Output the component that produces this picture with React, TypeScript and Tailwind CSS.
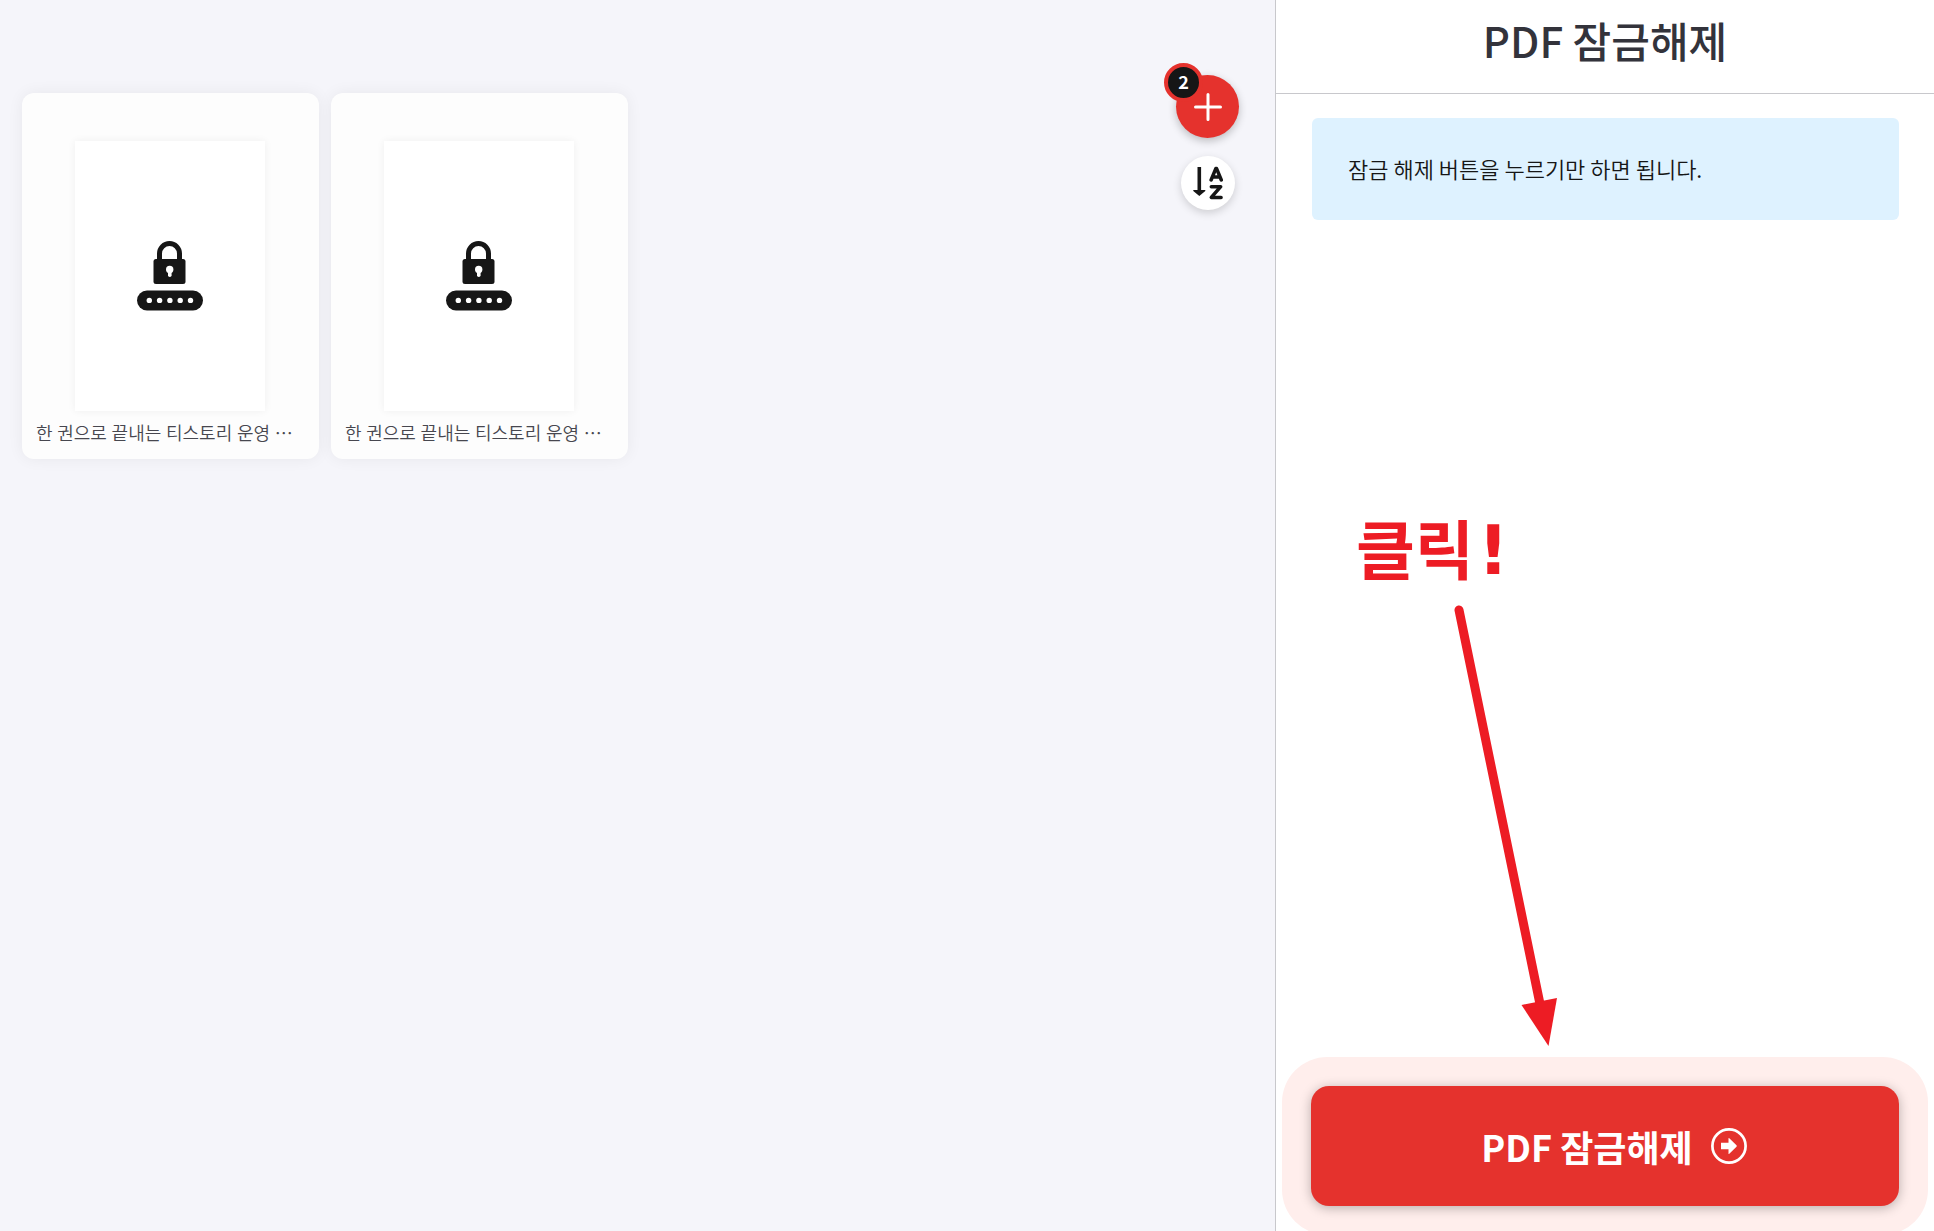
import React from "react";

interface FileCardProps {
  name: string;
}

const LockedIcon = () => (
  <svg width="66" height="70" viewBox="0 0 66 70" fill="none" aria-hidden="true">
    <path d="M22.500 19V12.500a10 10 0 0 1 20 0V19" stroke="#161616" strokeWidth="5" />
    <rect x="16.500" y="18" width="32" height="25" rx="2.500" fill="#161616" />
    <circle cx="32.700" cy="28.500" r="3.700" fill="#fff" />
    <path d="M31 29h3.600v5.200a1.800 1.800 0 0 1-3.600 0z" fill="#fff" />
    <rect y="49.500" width="66" height="20" rx="10" fill="#161616" />
    {[12.3, 22.6, 32.9, 43.2, 53.5].map((cx) => (
      <circle key={cx} cx={cx} cy="59.400" r="2.700" fill="#fff" />
    ))}
  </svg>
);

const PlusIcon = () => (
  <svg width="28" height="28" viewBox="0 0 28 28" stroke="#fff" strokeWidth="3" strokeLinecap="round" aria-hidden="true">
    <path d="M14 1.500v25M1.500 14h25" />
  </svg>
);

const SortIcon = () => (
  <svg width="30" height="34" viewBox="0 0 30 34" fill="none" aria-hidden="true">
    <path d="M4.500 1h3.600v23H12.300v1L6.300 30 .300 25v-1H4.500z" fill="#161616" />
    <path d="M18.100 14l4.700-11.400h.8l4.700 11.400M19.800 10.900h6.800" stroke="#161616" strokeWidth="3.500" strokeLinejoin="round" strokeLinecap="round" />
    <path d="M18.300 20.700h9.400L18.300 31.400h9.800" stroke="#161616" strokeWidth="3.500" strokeLinejoin="round" strokeLinecap="round" />
  </svg>
);

const ArrowCircleIcon = () => (
  <svg width="36" height="36" viewBox="0 0 36 36" fill="none" aria-hidden="true">
    <circle cx="18" cy="18" r="16.600" stroke="#fff" strokeWidth="2.700" />
    <path d="M10 14.800h7.500V10.600q0-1 .8-.3l7.200 7q.6.700 0 1.400l-7.200 7q-.8.700-.8-.3v-4.200H10z" fill="#fff" />
  </svg>
);

const FileCard: React.FC<FileCardProps> = ({ name }) => {
  return (
    <li className="flex w-[297px] flex-col items-center rounded-xl bg-[#fdfdfd] pt-12 pr-[13px] pb-3 pl-3 shadow-[0_0_16px_rgba(22,22,22,0.06)]">
      <div className="flex h-[270px] w-[190px] items-center justify-center bg-white shadow-[0_0_8px_rgba(22,22,22,0.06)]">
        <LockedIcon />
      </div>
      <p className="mt-2 w-full truncate px-0.5 font-['Noto_Sans','Noto_Sans_CJK_KR',sans-serif] text-[18px] font-[350] leading-7 text-[#47474f]">
        {name}
      </p>
    </li>
  );
};

const files = [
  { id: 1, name: "한 권으로 끝내는 티스토리 운영 ⋯" },
  { id: 2, name: "한 권으로 끝내는 티스토리 운영 ⋯" },
];

export default function App() {
  return (
    <div className="flex min-h-screen bg-[#f5f5fa] font-['Noto_Sans_CJK_KR',sans-serif] text-[#161616]">
      <main className="flex flex-1 items-start justify-between pr-9 pl-[22px]">
        <ul className="flex flex-wrap gap-3 pt-[93px]">
          {files.map((file) => (
            <FileCard key={file.id} name={file.name} />
          ))}
        </ul>
        <div className="flex flex-col items-center gap-[18px] pt-[75px]">
          <button
            type="button"
            aria-label="파일 추가"
            className="relative flex size-[63px] items-center justify-center rounded-full bg-[#e5322d] shadow-[0_3px_8px_rgba(0,0,0,0.24)]"
          >
            <PlusIcon />
            <span className="absolute -top-3 -left-3 flex size-[39px] items-center justify-center rounded-full border-4 border-[#e5322d] bg-[#161616] pb-0.5 text-[18px] font-bold text-white">
              2
            </span>
          </button>
          <button
            type="button"
            aria-label="이름순 정렬"
            className="flex size-[54px] items-center justify-center rounded-full bg-white shadow-[0_3px_8px_rgba(0,0,0,0.16)]"
          >
            <SortIcon />
          </button>
        </div>
      </main>

      <aside className="relative flex w-[659px] shrink-0 flex-col overflow-hidden border-l border-[#c8c8cc] bg-white">
        <header className="flex h-[94px] items-center justify-center border-b border-[#c8c8cc] pb-[14px]">
          <h1 className="text-[42px] font-medium leading-none text-[#33333b]">PDF 잠금해제</h1>
        </header>
        <div className="flex-1 pt-6 pr-[35px] pl-9">
          <p className="rounded-md bg-[#def2ff] px-9 pt-[34px] pb-9 text-[22px] font-[350] leading-8">
            잠금 해제 버튼을 누르기만 하면 됩니다.
          </p>
        </div>

        <div className="absolute top-[500px] left-20 text-[#ed1c24]">
          <p className="h-[100px] text-[64px] font-bold leading-[92px]">
            클릭<span className="ml-1 font-['DejaVu_Sans'] text-[68px]">!</span>
          </p>
          <svg width="220" height="450" viewBox="0 0 220 450" aria-hidden="true">
            <path d="M103 10L184 404" stroke="#ed1c24" strokeWidth="9" strokeLinecap="round" />
            <path d="M165.500 405L201 398L192.500 446z" fill="#ed1c24" />
          </svg>
        </div>

        <footer className="px-[35px] pb-[25px]">
          <div className="rounded-[18px] shadow-[0_0_0_29px_#ffeeec]">
            <button
              type="button"
              className="flex h-[120px] w-full items-center justify-center gap-[18px] rounded-[18px] bg-[#e5322d] pl-[18px] text-[36px] font-bold text-white shadow-[0_2px_12px_rgba(0,0,0,0.28)]"
            >
              PDF 잠금해제
              <ArrowCircleIcon />
            </button>
          </div>
        </footer>
      </aside>
    </div>
  );
}
